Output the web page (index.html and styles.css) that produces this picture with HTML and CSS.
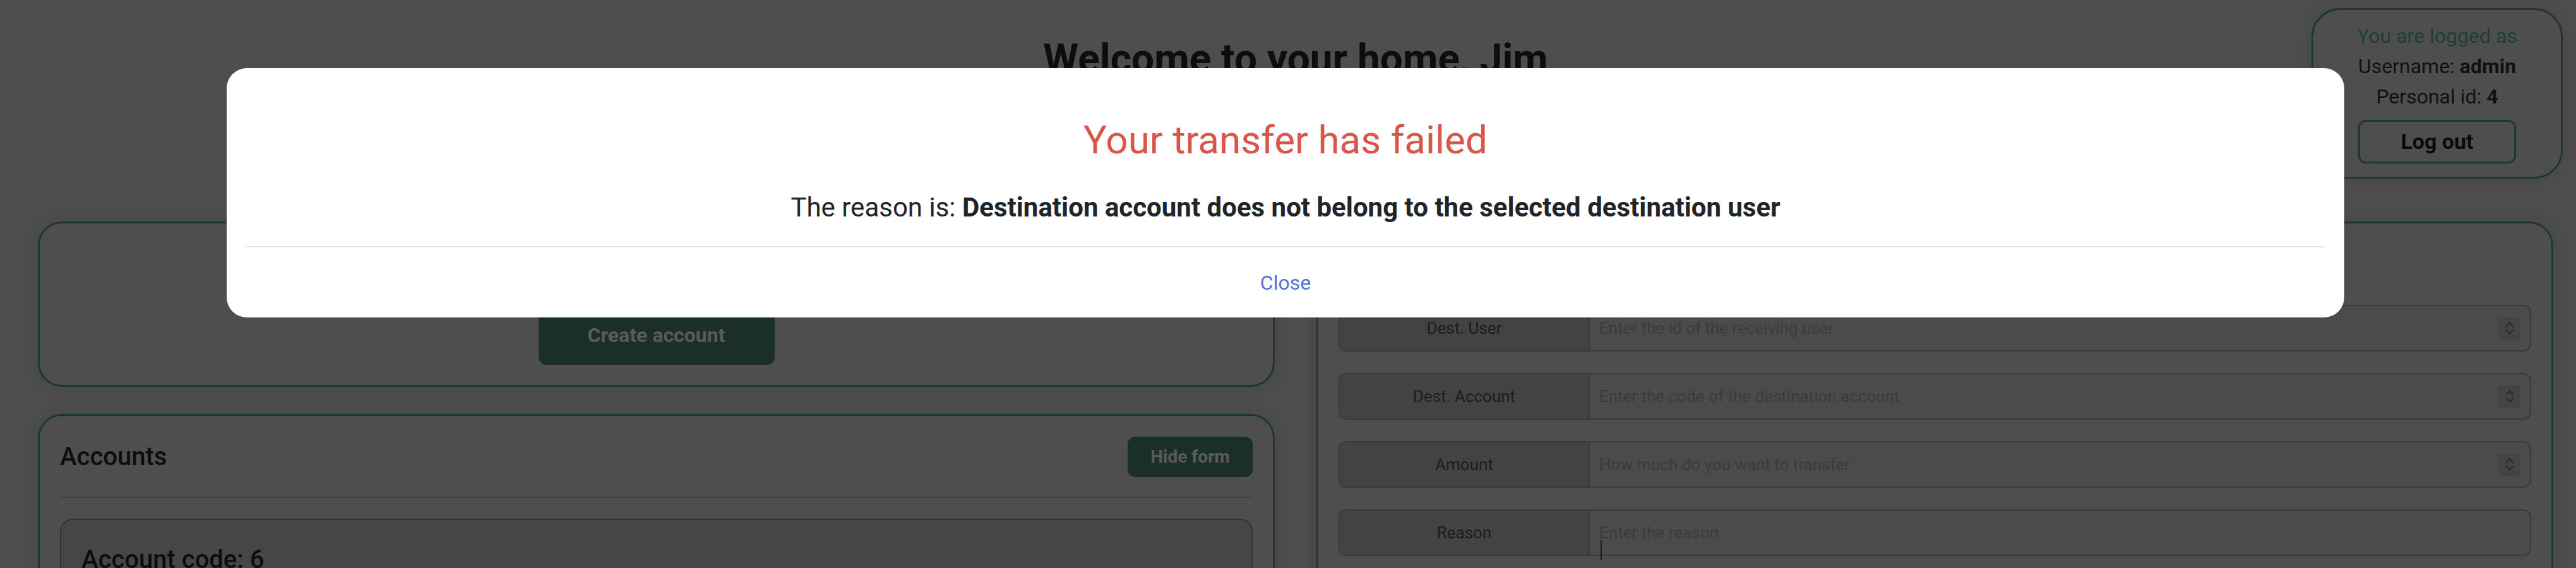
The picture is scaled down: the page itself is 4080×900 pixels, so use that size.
FILE: index.html
```html
<!DOCTYPE html>
<html lang="en">
<head>
<meta charset="utf-8">
<title>Home</title>
<link rel="stylesheet" href="styles.css">
</head>
<body class="dimmed">
<div class="page">
  <header class="top">
    <h1 class="welcome">Welcome to your home, Jim</h1>
  </header>
  <main class="columns">
    <div class="col">
      <section class="card card-create">
        <button class="btn btn-create" type="button">Create account</button>
      </section>
      <section class="card card-accounts">
        <div class="card-head">
          <h2 class="card-title">Accounts</h2>
          <button class="btn btn-sm" type="button">Hide form</button>
        </div>
        <hr class="rule">
        <div class="account">
          <h3 class="account-code">Account code: 6</h3>
        </div>
      </section>
    </div>
    <section class="card card-transfer">
      <div class="field">
        <span class="label">Dest. User</span>
        <input class="input" type="text" placeholder="Enter the id of the receiving user">
        <span class="spin"><svg viewBox="0 0 16 26" width="16" height="26"><path d="M3 10 8 4 13 10M3 16 8 22 13 16" fill="none" stroke="#2a2a2a" stroke-width="2.2" stroke-linecap="round" stroke-linejoin="round"/></svg></span>
      </div>
      <div class="field">
        <span class="label">Dest. Account</span>
        <input class="input" type="text" placeholder="Enter the code of the destination account">
        <span class="spin"><svg viewBox="0 0 16 26" width="16" height="26"><path d="M3 10 8 4 13 10M3 16 8 22 13 16" fill="none" stroke="#2a2a2a" stroke-width="2.2" stroke-linecap="round" stroke-linejoin="round"/></svg></span>
      </div>
      <div class="field">
        <span class="label">Amount</span>
        <input class="input" type="text" placeholder="How much do you want to transfer">
        <span class="spin"><svg viewBox="0 0 16 26" width="16" height="26"><path d="M3 10 8 4 13 10M3 16 8 22 13 16" fill="none" stroke="#2a2a2a" stroke-width="2.2" stroke-linecap="round" stroke-linejoin="round"/></svg></span>
      </div>
      <div class="field">
        <span class="label">Reason</span>
        <input class="input" type="text" placeholder="Enter the reason">
      </div>
    </section>
  </main>
</div>

<aside class="logged">
  <p class="logged-title">You are logged as</p>
  <p>Username: <b>admin</b></p>
  <p>Personal id: <b>4</b></p>
  <button class="logout" type="button">Log out</button>
</aside>

<div class="modal" role="dialog">
  <h2 class="modal-title">Your transfer has failed</h2>
  <p class="modal-reason">The reason is: <b>Destination account does not belong to the selected destination user</b></p>
  <div class="modal-foot">
    <button class="modal-close" type="button">Close</button>
  </div>
</div>

<div class="cursor"></div>
</body>
</html>
```

FILE: styles.css
```css
html, body {
  margin: 0;
  padding: 0;
}

/* page is shown dimmed behind an open modal dialog */
body {
  width: 4080px;
  height: 900px;
  overflow: hidden;
  position: relative;
  background: #4e4e4e;
  font-family: Roboto, "Liberation Sans", Arial, sans-serif;
  color: #111111;
}

.page {
  padding: 55px 36px 0 60px;
}

.welcome {
  margin: 0;
  text-align: center;
  font-size: 64px;
  line-height: 77px;
  font-weight: 700;
  color: #0d0d0d;
}

.columns {
  display: grid;
  grid-template-columns: 1fr 1fr;
  gap: 66px;
  margin-top: 219px;
  align-items: start;
}

.col {
  display: flex;
  flex-direction: column;
  gap: 43px;
}

.card {
  border: 3px solid #1d392f;
  border-radius: 38px;
  padding: 32px;
  background: #4e4e4e;
  box-shadow: 0 0 34px rgba(0, 0, 0, 0.12);
}

.card-create {
  padding-top: 130px;
  display: flex;
  justify-content: center;
}

.btn {
  font-family: inherit;
  font-weight: 700;
  border: 0;
  border-radius: 12px;
  background: #1b2f2a;
  color: #5a5a5a;
  padding: 0;
}

.btn-create {
  width: 374px;
  font-size: 32px;
  line-height: 48px;
  padding: 23px 0;
}

.card-head {
  display: flex;
  justify-content: space-between;
  align-items: center;
  padding-top: 1px;
}

.card-title {
  margin: 0;
  font-size: 40px;
  line-height: 48px;
  font-weight: 500;
  color: #0d0d0d;
}

.btn-sm {
  width: 198px;
  font-size: 28px;
  line-height: 42px;
  padding: 11px 0;
}

.rule {
  border: 0;
  border-top: 2px solid #424242;
  margin: 31px 0 33px;
}

.account {
  border: 2px solid #333333;
  border-radius: 20px;
  background: #464646;
  padding: 39px 32px;
  height: 200px;
}

.account-code {
  margin: 0;
  font-size: 40px;
  line-height: 48px;
  font-weight: 500;
  color: #0d0d0d;
}

.card-transfer {
  padding-top: 129px;
  height: 900px;
}

.field {
  display: flex;
  align-items: center;
  box-sizing: border-box;
  height: 74px;
  border: 2px solid #3a3a3e;
  border-radius: 12px;
  overflow: hidden;
  background: #4b4b4b;
  margin-bottom: 34px;
}

.label {
  box-sizing: border-box;
  width: 396px;
  align-self: stretch;
  display: flex;
  align-items: center;
  justify-content: center;
  background: #434346;
  border-right: 2px solid #3a3a3e;
  font-size: 26px;
  color: #1c1c1c;
}

.input {
  flex: 1;
  min-width: 0;
  height: 100%;
  border: 0;
  outline: 0;
  background: transparent;
  font-family: inherit;
  font-size: 26px;
  color: #1c1c1c;
  padding: 0 15px;
}

.input::placeholder {
  color: #3b3b3b;
  opacity: 1;
}

.spin {
  width: 35px;
  height: 35px;
  margin-right: 15px;
  background: #444444;
  display: flex;
  align-items: center;
  justify-content: center;
  flex: none;
}

.logged {
  position: absolute;
  top: 13px;
  left: 3661px;
  width: 398px;
  height: 270px;
  box-sizing: border-box;
  border: 3px solid #1d392f;
  border-radius: 45px;
  padding-top: 17px;
  text-align: center;
  font-size: 32px;
  line-height: 48px;
  color: #111111;
  background: #4e4e4e;
  box-shadow: 0 0 30px rgba(0, 0, 0, 0.1);
}

.logged p {
  margin: 0;
}

.logged-title {
  color: #1f3f34;
}

.logout {
  margin-top: 13px;
  width: 250px;
  height: 69px;
  box-sizing: border-box;
  border: 3px solid #1d392f;
  border-radius: 12px;
  background: transparent;
  font-family: inherit;
  font-weight: 700;
  font-size: 34px;
  line-height: 51px;
  color: #0a0a0a;
  padding: 0;
}

.modal {
  position: fixed;
  z-index: 20;
  top: 108px;
  left: 359px;
  width: 3354px;
  box-sizing: border-box;
  background: #ffffff;
  border-radius: 32px;
  padding: 77px 32px 31px;
  text-align: center;
}

.modal-title {
  margin: 0;
  font-size: 62px;
  line-height: 74px;
  font-weight: 400;
  color: #d9574a;
}

.modal-reason {
  margin: 40px 0 0;
  font-size: 42px;
  line-height: 60px;
  padding-bottom: 31px;
  border-bottom: 2px solid #e3e3e3;
  color: #212529;
}

.modal-foot {
  padding-top: 32px;
}

.modal-close {
  display: inline-block;
  border: 0;
  background: none;
  padding: 0;
  font-family: inherit;
  font-size: 32px;
  line-height: 48px;
  color: #5470d8;
}

.cursor {
  position: fixed;
  z-index: 30;
  top: 856px;
  left: 2535px;
  width: 2px;
  height: 31px;
  background: #1c1c1c;
}
```
